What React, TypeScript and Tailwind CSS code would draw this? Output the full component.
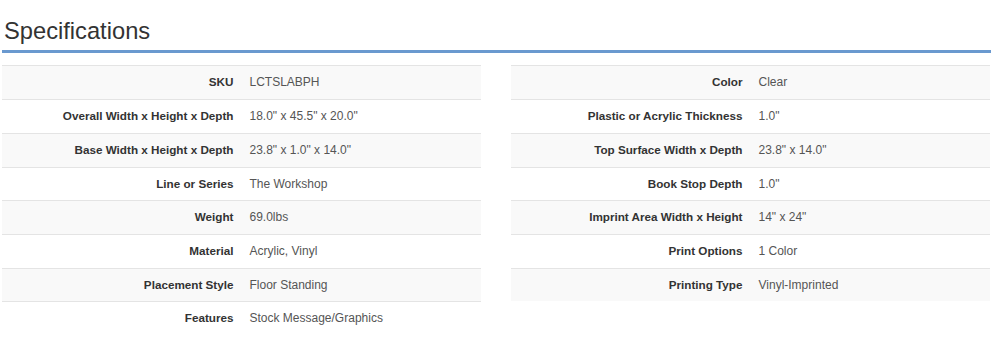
import React from 'react';

type Spec = { label: string; value: string };

const leftSpecs: Spec[] = [
  { label: 'SKU', value: 'LCTSLABPH' },
  { label: 'Overall Width x Height x Depth', value: '18.0" x 45.5" x 20.0"' },
  { label: 'Base Width x Height x Depth', value: '23.8" x 1.0" x 14.0"' },
  { label: 'Line or Series', value: 'The Workshop' },
  { label: 'Weight', value: '69.0lbs' },
  { label: 'Material', value: 'Acrylic, Vinyl' },
  { label: 'Placement Style', value: 'Floor Standing' },
  { label: 'Features', value: 'Stock Message/Graphics' },
];

const rightSpecs: Spec[] = [
  { label: 'Color', value: 'Clear' },
  { label: 'Plastic or Acrylic Thickness', value: '1.0"' },
  { label: 'Top Surface Width x Depth', value: '23.8" x 14.0"' },
  { label: 'Book Stop Depth', value: '1.0"' },
  { label: 'Imprint Area Width x Height', value: '14" x 24"' },
  { label: 'Print Options', value: '1 Color' },
  { label: 'Printing Type', value: 'Vinyl-Imprinted' },
];

const SpecTable = ({ specs }: { specs: Spec[] }) => (
  <table className="w-[479px] border-collapse text-[12px]">
    <tbody>
      {specs.map((s, i) => (
        <tr
          key={s.label}
          className={i % 2 === 0 ? 'bg-[#f9f9f9]' : 'bg-white'}
        >
          <th className="w-1/2 border-t border-[#e4e4e4] px-2 py-2 text-right text-[11.7px] font-bold leading-[16.7px] text-[#333]">
            {s.label}
          </th>
          <td className="border-t border-[#e4e4e4] px-2 py-2 text-left leading-[16.7px] text-[#555]">
            {s.value}
          </td>
        </tr>
      ))}
    </tbody>
  </table>
);

const App = () => {
  return (
    <div className="min-h-[351px] w-[1000px] bg-white pl-[2px] font-['Liberation_Sans',Arial,sans-serif]">
      <div className="w-[989px]">
        <h2 className="border-b-[3px] border-[#6a99cf] pt-[18px] pb-[6px] pl-[2px] text-[23.7px] font-normal leading-[26.4px] text-[#333]">
          Specifications
        </h2>
      </div>
      <div className="mt-[12px] flex w-[988px] items-start gap-[30px]">
        <SpecTable specs={leftSpecs} />
        <SpecTable specs={rightSpecs} />
      </div>
    </div>
  );
};

export default App;
